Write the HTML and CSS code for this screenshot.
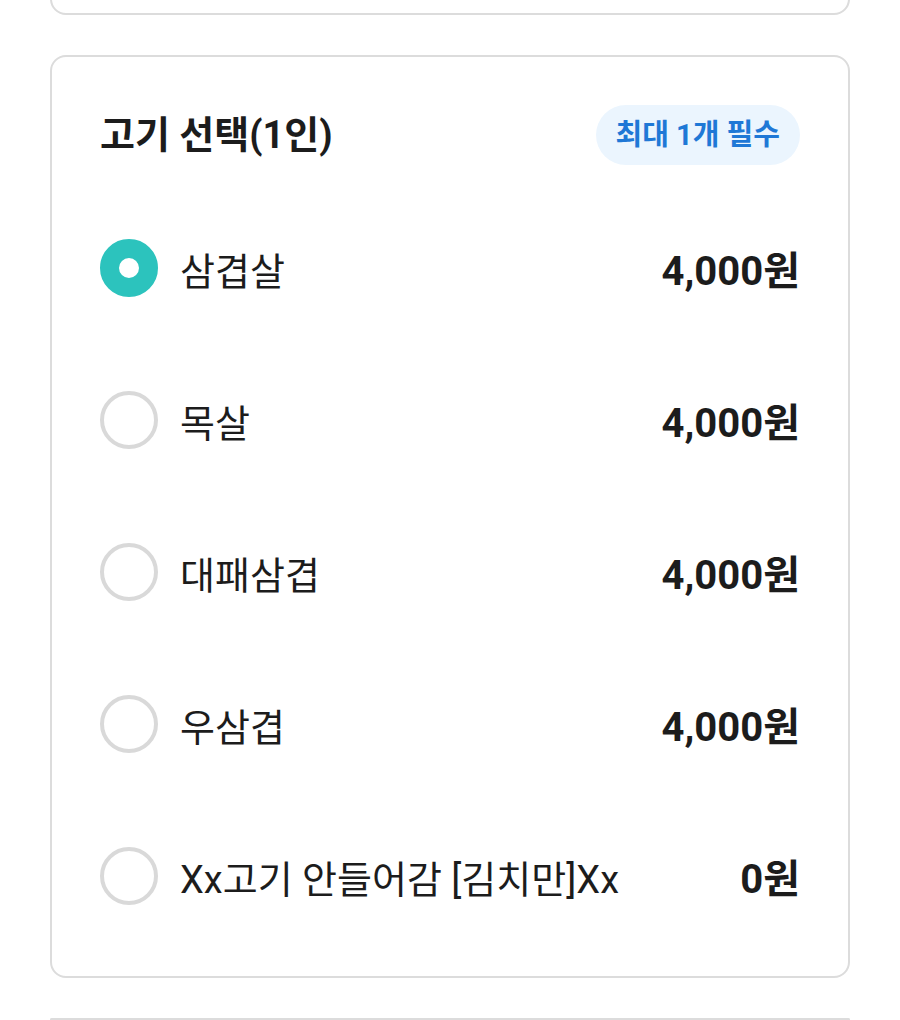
FILE: index.html
```html
<!DOCTYPE html>
<html lang="ko">
<head>
<meta charset="utf-8">
<link rel="stylesheet" href="styles.css">
</head>
<body>
<div class="page">
  <div class="card card-prev"></div>
  <section class="card">
    <header class="card-head">
      <h2 class="title">고기 선택(1인)</h2>
      <span class="badge">최대 1개 필수</span>
    </header>
    <ul class="options">
      <li class="option">
        <span class="radio radio-on"></span>
        <span class="name">삼겹살</span>
        <span class="price">4,000원</span>
      </li>
      <li class="option">
        <span class="radio"></span>
        <span class="name">목살</span>
        <span class="price">4,000원</span>
      </li>
      <li class="option">
        <span class="radio"></span>
        <span class="name">대패삼겹</span>
        <span class="price">4,000원</span>
      </li>
      <li class="option">
        <span class="radio"></span>
        <span class="name">우삼겹</span>
        <span class="price">4,000원</span>
      </li>
      <li class="option">
        <span class="radio"></span>
        <span class="name">Xx고기 안들어감 [김치만]Xx</span>
        <span class="price">0원</span>
      </li>
    </ul>
  </section>
  <div class="card card-next"></div>
</div>
</body>
</html>
```
FILE: styles.css
```css
* { box-sizing: border-box; }
html, body { margin: 0; padding: 0; background: #fff; }
html { overflow: hidden; }
body {
  font-family: Roboto, "Noto Sans CJK KR", sans-serif;
  color: #1c1c1c;
  overflow: hidden;
  height: 1020px;
}
.page {
  width: 800px;
  height: 1020px;
  overflow: hidden;
  margin: 0 auto;
  display: flex;
  flex-direction: column;
  justify-content: flex-end;
  gap: 40px;
}
.card {
  border: 2px solid #dcdcdc;
  border-radius: 16px;
  background: #fff;
  flex: none;
}
.card-prev { height: 200px; }
.card-next {
  height: 2px;
  border-bottom: none;
  border-radius: 16px 16px 0 0;
}
.card-head {
  display: flex;
  align-items: center;
  justify-content: space-between;
  padding: 48px 48px 0 48px;
}
.title {
  margin: 0;
  font-size: 38px;
  font-weight: 700;
  line-height: 60px;
}
.badge {
  height: 60px;
  line-height: 60px;
  padding: 0 20px;
  border-radius: 30px;
  background: #ebf5fe;
  color: #1f78d6;
  font-size: 29px;
  font-weight: 700;
}
.options {
  list-style: none;
  margin: 0;
  padding: 27px 48px 24px 48px;
}
.option {
  height: 152px;
  display: flex;
  align-items: center;
}
.radio {
  width: 58px;
  height: 58px;
  border-radius: 50%;
  border: 4px solid #d9d9d9;
  flex: none;
  margin-right: 22px;
}
.radio-on {
  border: 19px solid #2cc3bd;
  background: #fff;
}
.name {
  flex: 1;
  font-size: 38px;
  font-weight: 400;
}
.price {
  font-size: 40px;
  font-weight: 700;
}
```
